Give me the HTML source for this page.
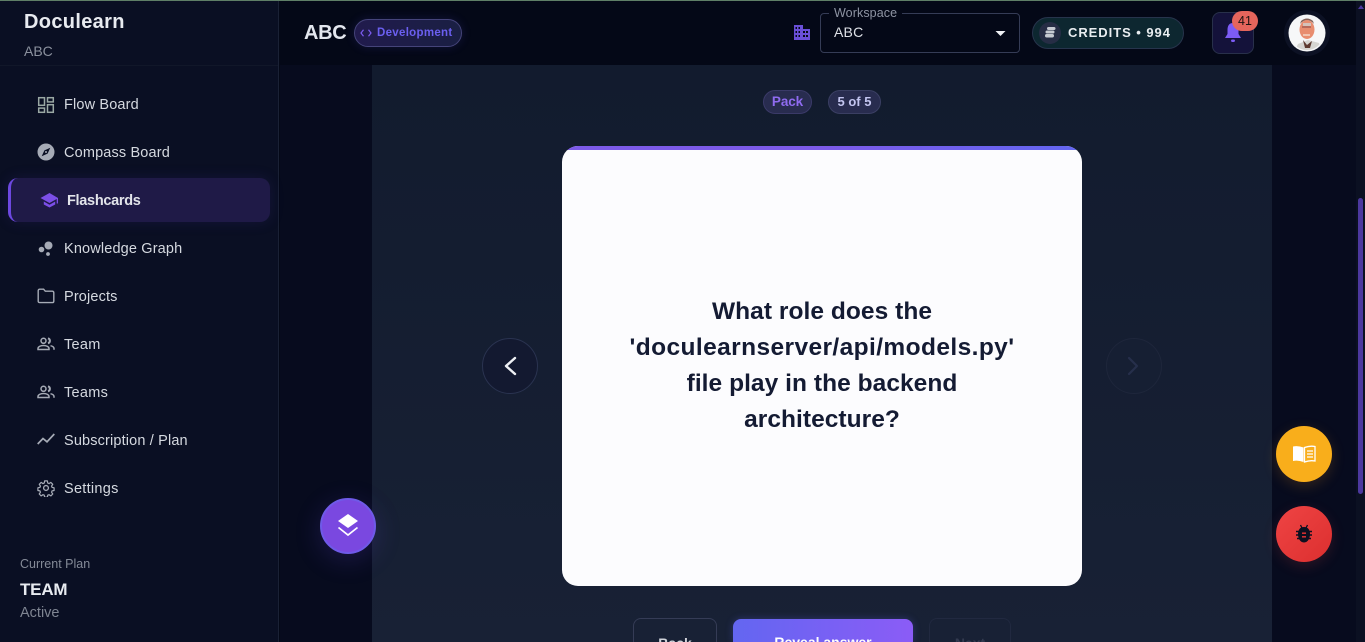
<!DOCTYPE html>
<html lang="en">
<head>
<meta charset="utf-8">
<title>Doculearn</title>
<style>
html,body{margin:0;padding:0;width:1365px;height:642px;overflow:hidden;background:#040817}
body{position:relative;font-family:"Liberation Sans",sans-serif;color:#e5e7eb}
.a{position:absolute;white-space:nowrap}
svg{position:absolute;display:block}
.nav{position:absolute;left:64px;font-size:14.5px;line-height:18px;color:#d5d9e0;letter-spacing:.15px;white-space:nowrap}
</style>
</head>
<body>
<div class="a" style="left:0;top:0;width:1365px;height:1px;background:#5f7f67;z-index:9"></div>

<!-- main background -->
<div class="a" style="left:280px;top:0;width:1085px;height:65px;background:#040817"></div>
<div class="a" style="left:280px;top:65px;width:92px;height:577px;background:#070b1e"></div>
<div class="a" style="left:372px;top:65px;width:900px;height:577px;background:linear-gradient(180deg,#121b2e,#182135)"></div>
<div class="a" style="left:1272px;top:65px;width:84px;height:577px;background:#070b1e"></div>
<div class="a" style="left:1356px;top:0;width:9px;height:642px;background:#0b1022"></div>
<div class="a" style="left:1358px;top:198px;width:5px;height:296px;border-radius:3px;background:#4c389f"></div>
<svg style="left:1357px;top:4px" width="8" height="6"><path d="M4 1 7 5H1Z" fill="#4c389f"/></svg>

<!-- sidebar -->
<div class="a" style="left:0;top:0;width:278px;height:642px;background:#0a0f23;border-right:1px solid #1a2135"></div>
<div class="a" style="left:0;top:65px;width:278px;height:1px;background:#111729"></div>
<div class="a" style="left:24px;top:10px;font-size:20px;line-height:24px;font-weight:700;color:#e8ebf0;letter-spacing:.33px">Doculearn</div>
<div class="a" style="left:24px;top:43px;font-size:14px;line-height:17px;color:#8b919e">ABC</div>

<div class="a" style="left:8px;top:178px;width:262px;height:44px;box-sizing:border-box;background:#1f1a47;border-left:3px solid #6d48e0;border-radius:10px;box-shadow:0 0 14px rgba(70,50,160,.18)"></div>

<!-- Flow Board -->
<svg style="left:37px;top:96px" width="18" height="18" viewBox="0 0 18 18" fill="none" stroke="#9aa8a4" stroke-width="1.5"><rect x="1.7" y="1.7" width="5.8" height="7.6"/><rect x="10.5" y="1.7" width="5.8" height="4.2"/><rect x="1.7" y="12.1" width="5.8" height="4.2"/><rect x="10.5" y="8.7" width="5.8" height="7.6"/></svg>
<div class="nav" style="top:96px">Flow Board</div>
<!-- Compass -->
<svg style="left:37px;top:143px" width="18" height="18" viewBox="0 0 18 18"><circle cx="9" cy="9" r="8.5" fill="#a6abb6"/><path d="M13.3 4.7 10.6 10.6 4.7 13.3 7.4 7.4Z" fill="#0a0f23"/><circle cx="9" cy="9" r="1" fill="#a6abb6"/></svg>
<div class="nav" style="top:144px">Compass Board</div>
<!-- Flashcards -->
<svg style="left:40px;top:191px" width="19" height="18" viewBox="0 0 19 18"><path d="M9.5 2 .5 7 9.5 12 16.700 8V12.500H18V7Z" fill="#7c4fe8"/><path d="M3.800 10.500V13.500L9.500 16.500 15.200 13.500V10.500L9.500 13.700Z" fill="#7c4fe8"/></svg>
<div class="nav" style="left:67px;top:192px;font-weight:700;color:#e2e4ea;letter-spacing:-.3px">Flashcards</div>
<!-- Knowledge Graph -->
<svg style="left:37px;top:240px" width="18" height="18" viewBox="0 0 18 18" fill="#a6abb6"><circle cx="11.500" cy="5.500" r="4"/><circle cx="4.500" cy="9.500" r="2.800"/><circle cx="11" cy="14" r="1.900"/></svg>
<div class="nav" style="top:240px">Knowledge Graph</div>
<!-- Projects -->
<svg style="left:37px;top:288px" width="18" height="16" viewBox="0 0 18 16" fill="none" stroke="#a6abb6" stroke-width="1.400"><path d="M1.200 2.800Q1.200 1.200 2.800 1.200H6.600L8.300 3.200H15.200Q16.800 3.200 16.800 4.800V13.200Q16.800 14.600 15.200 14.600H2.800Q1.200 14.600 1.200 13.200Z"/></svg>
<div class="nav" style="top:288px">Projects</div>
<!-- Team -->
<svg style="left:37px;top:337px" width="18" height="14" viewBox="0 0 18 14" fill="none" stroke="#a6abb6" stroke-width="1.500"><circle cx="6.500" cy="3.800" r="2.500"/><path d="M1 12.500V11.500C1 9.500 4 8.500 6.500 8.500S12 9.500 12 11.500V12.500Z"/><path d="M11 1.300A2.600 2.600 0 0 1 11 6.300" stroke-width="2"/><path d="M13.500 8.700C15.500 9.200 17 10 17 11.500V12.800"/></svg>
<div class="nav" style="top:336px;letter-spacing:.28px">Team</div>
<!-- Teams -->
<svg style="left:37px;top:385px" width="18" height="14" viewBox="0 0 18 14" fill="none" stroke="#a6abb6" stroke-width="1.500"><circle cx="6.500" cy="3.800" r="2.500"/><path d="M1 12.500V11.500C1 9.500 4 8.500 6.500 8.500S12 9.500 12 11.500V12.500Z"/><path d="M11 1.300A2.600 2.600 0 0 1 11 6.300" stroke-width="2"/><path d="M13.500 8.700C15.500 9.200 17 10 17 11.500V12.800"/></svg>
<div class="nav" style="top:384px;letter-spacing:.28px">Teams</div>
<!-- Subscription -->
<svg style="left:37px;top:432px" width="18" height="14" viewBox="0 0 18 14" fill="none" stroke="#a6abb6" stroke-width="1.700"><path d="M.700 12 6 6.500 10 9.800 17.300 2"/></svg>
<div class="nav" style="top:432px">Subscription / Plan</div>
<!-- Settings -->
<svg style="left:37px;top:479px" width="18" height="18" viewBox="0 0 24 24" fill="none" stroke="#a6abb6" stroke-width="1.800" stroke-linejoin="round"><circle cx="12" cy="12" r="3.200"/><path d="M10 1.500h4l.6 3.200 1.900.8 2.700-1.800 2.800 2.800-1.800 2.700.8 1.900 3 .6v4l-3 .6-.8 1.900 1.800 2.700-2.800 2.800-2.700-1.800-1.900.8-.6 3h-4l-.6-3-1.900-.8-2.700 1.800-2.800-2.800 1.800-2.700-.8-1.900-3-.6v-4l3-.6.8-1.900-1.800-2.700 2.800-2.800 2.700 1.800 1.900-.8Z" transform="translate(1.200 1.200) scale(.9)"/></svg>
<div class="nav" style="top:480px;letter-spacing:.28px">Settings</div>

<div class="a" style="left:20px;top:557px;font-size:12.500px;line-height:15px;color:#848a97">Current Plan</div>
<div class="a" style="left:20px;top:580px;font-size:17px;line-height:20px;font-weight:700;color:#e8ebf0;letter-spacing:-.2px">TEAM</div>
<div class="a" style="left:20px;top:604px;font-size:14.500px;line-height:18px;color:#7f8592">Active</div>

<!-- header left -->
<div class="a" style="left:304px;top:21px;font-size:20px;line-height:24px;font-weight:700;color:#e3e6ee;letter-spacing:-.3px">ABC</div>
<div class="a" style="left:354px;top:19px;width:108px;height:28px;box-sizing:border-box;border:1px solid #45447a;border-radius:14px;background:linear-gradient(90deg,#211b4d,#1a1f43);box-shadow:0 0 10px rgba(80,70,200,.2)"></div>
<svg style="left:360px;top:29px" width="12" height="8" viewBox="0 0 12 8" fill="none" stroke="#7c5cf0" stroke-width="1.200"><path d="M3.500 .8 1 4 3.500 7.200M8.500 .8 11 4 8.500 7.200"/></svg>
<div class="a" style="left:377px;top:26px;font-size:11.500px;line-height:14px;font-weight:700;color:#6b5ff0;letter-spacing:.3px">Development</div>

<!-- workspace -->
<svg style="left:793px;top:24px" width="18" height="17" viewBox="0 0 18 17" fill="#6a4fd8"><path d="M1 1H10V5H17V16H1ZM2.500 3V5H4V3ZM5.500 3V5H7V3ZM2.500 7V9H4V7ZM5.500 7V9H7V7ZM2.500 11V13H4V11ZM5.500 11V13H7V11ZM10 7V9H12V7ZM13 7V9H15V7ZM10 11V13H12V11ZM13 11V13H15V11Z" fill-rule="evenodd"/></svg>
<div class="a" style="left:820px;top:13px;width:200px;height:40px;box-sizing:border-box;border:1px solid #353c56;border-radius:4px"></div>
<div class="a" style="left:829px;top:6px;padding:0 5px;background:#040817;font-size:12.500px;line-height:14px;color:#8e94a3;letter-spacing:.1px">Workspace</div>
<div class="a" style="left:834px;top:24px;font-size:14px;line-height:17px;color:#dfe2e8;letter-spacing:.2px">ABC</div>
<svg style="left:995px;top:30px" width="11" height="7"><path d="M.500 1H10.500L5.500 6Z" fill="#eef0f4"/></svg>

<!-- credits -->
<div class="a" style="left:1032px;top:17px;width:152px;height:32px;box-sizing:border-box;border:1px solid #27344c;border-radius:16px;background:#0d2730"></div>
<div class="a" style="left:1039px;top:22px;width:22px;height:22px;border-radius:50%;background:#262d45"></div>
<svg style="left:1043px;top:26px" width="14" height="13" viewBox="0 0 14 13" fill="#c6cad2"><rect x="4" y="1" width="8.500" height="3" rx="1.500"/><rect x="2.500" y="4.500" width="9" height="3" rx="1.500"/><rect x="2" y="8" width="9" height="3.500" rx="1.700"/></svg>
<div class="a" style="left:1068px;top:25px;font-size:13px;line-height:16px;font-weight:700;color:#e9edf0;letter-spacing:.95px">CREDITS • 994</div>

<!-- bell -->
<div class="a" style="left:1212px;top:12px;width:42px;height:42px;box-sizing:border-box;border:1px solid #28304a;border-radius:8px;background:#14123a"></div>
<svg style="left:1223px;top:22px" width="20" height="22" viewBox="0 0 20 22" fill="#7c5cf5"><path d="M10 1C6 1 4.500 4 4.500 8V12L2 16H18L15.500 12V8C15.500 4 14 1 10 1Z"/><rect x="8" y="17.500" width="4" height="2.500" rx="1.200"/></svg>
<div class="a" style="left:1232px;top:11px;width:26px;height:20px;border-radius:10px;background:#e5655c;color:#1c1412;font-size:12.500px;line-height:20px;text-align:center">41</div>

<!-- avatar -->
<div class="a" style="left:1284px;top:10px;width:46px;height:46px;border-radius:50%;background:#0c1124"></div>
<svg style="left:1288px;top:14px" width="38" height="38" viewBox="0 0 38 38"><circle cx="19" cy="19" r="18.500" fill="#f6f7f8"/><clipPath id="c"><circle cx="19" cy="19" r="17"/></clipPath><g clip-path="url(#c)"><path d="M6 38 10 30 20 26 31 29 34 38Z" fill="#d6d6d2"/><path d="M15 26 19 31 24 27 22 34H17Z" fill="#5e3a30"/><ellipse cx="19" cy="15.500" rx="7.500" ry="9.500" fill="#e88d6f"/><path d="M12 10Q19 2 26 10L25 7Q19 2 13 7Z" fill="#86645a"/><rect x="14" y="12" width="9" height="2" fill="#b86a5a"/><rect x="15" y="20" width="7" height="2" fill="#f1c4b0"/><rect x="15" y="9" width="8" height="3" fill="#d4c2ba"/></g></svg>

<!-- pills -->
<div class="a" style="left:763px;top:90px;width:49px;height:24px;box-sizing:border-box;border:1px solid #3a3a68;border-radius:12px;background:#282c4f;color:#8f6bf0;font-size:13.500px;line-height:21px;text-align:center;font-weight:700;letter-spacing:-.1px">Pack</div>
<div class="a" style="left:828px;top:90px;width:53px;height:24px;box-sizing:border-box;border:1px solid #3a3f63;border-radius:12px;background:#282c4f;color:#c3c5f0;font-size:13px;line-height:21px;text-align:center;font-weight:700">5 of 5</div>

<!-- card -->
<div class="a" style="left:562px;top:146px;width:520px;height:440px;border-radius:16px;background:#fcfcfe;overflow:hidden"><div style="height:4px;background:linear-gradient(90deg,#7c5ae8 50%,#6366f1)"></div></div>
<div class="a" style="left:562px;top:294px;width:520px;text-align:center;font-size:24.500px;line-height:36px;font-weight:700;color:#141b33;letter-spacing:.05px">What role does the<br><span style="letter-spacing:.4px">'doculearnserver/api/models.py'</span><br>file play in the backend<br>architecture?</div>

<!-- arrows -->
<div class="a" style="left:482px;top:338px;width:56px;height:56px;box-sizing:border-box;border:1px solid #2a3350;border-radius:50%;background:#131930"></div>
<svg style="left:501px;top:355px" width="18" height="22" viewBox="0 0 18 22" fill="none" stroke="#eef0f4" stroke-width="2.400" stroke-linecap="round" stroke-linejoin="round"><path d="M14 3 5 11 14 19"/></svg>
<div class="a" style="left:1106px;top:338px;width:56px;height:56px;box-sizing:border-box;border:1px solid #1e263b;border-radius:50%;background:#161f33"></div>
<svg style="left:1125px;top:355px" width="18" height="22" viewBox="0 0 18 22" fill="none" stroke="#262f4b" stroke-width="2.200" stroke-linecap="round" stroke-linejoin="round"><path d="M4 3 12 11 4 19"/></svg>

<!-- bottom buttons, clipped at the frame edge -->
<div class="a" style="left:633px;top:618px;width:84px;height:24px;box-sizing:border-box;border:1px solid #353c56;border-bottom:0;border-radius:8px 8px 0 0;overflow:hidden;color:#d0d3da;font-size:14px;line-height:48px;text-align:center;font-weight:700">Back</div>
<div class="a" style="left:733px;top:619px;width:180px;height:23px;border-radius:8px 8px 0 0;overflow:hidden;background:linear-gradient(90deg,#6366f1,#8b5cf6);color:#fff;font-size:14px;line-height:46px;text-align:center;font-weight:700;box-shadow:0 0 8px rgba(99,102,241,.3)">Reveal answer</div>
<div class="a" style="left:929px;top:618px;width:82px;height:24px;box-sizing:border-box;border:1px solid #212940;border-bottom:0;border-radius:8px 8px 0 0;overflow:hidden;color:#333a50;font-size:14px;line-height:48px;text-align:center;font-weight:700">Next</div>

<!-- layers fab -->
<div class="a" style="left:320px;top:498px;width:56px;height:56px;box-sizing:border-box;border:2px solid #6f5ae8;border-radius:50%;background:#7a48e0;box-shadow:0 6px 26px rgba(100,70,220,.22)"></div>
<svg style="left:336px;top:512px" width="24" height="25" viewBox="0 0 24 25"><path d="M12 2 22 9 12 16 2 9Z" fill="#fff"/><path d="M2.500 15.500 12 23 21.500 15.500" fill="none" stroke="#fff" stroke-width="1.700"/></svg>

<!-- yellow fab -->
<div class="a" style="left:1276px;top:426px;width:56px;height:56px;border-radius:50%;background:#f9ae1b;box-shadow:0 4px 14px rgba(249,150,30,.18)"></div>
<svg style="left:1292px;top:445px" width="24" height="18" viewBox="0 0 24 18"><path d="M1 1.500Q6 .500 11.500 2.500V17Q6 15 1 16Z" fill="#fff"/><path d="M12.500 2.500Q18 .500 23 1.500V16Q18 15 12.500 17Z" fill="none" stroke="#fff" stroke-width="1.300"/><path d="M15 6H21M15 9H21M15 12H21" stroke="#fff" stroke-width="1.200"/></svg>

<!-- red fab -->
<div class="a" style="left:1276px;top:506px;width:56px;height:56px;border-radius:50%;background:linear-gradient(135deg,#ef4444,#dc2f2f);box-shadow:0 4px 14px rgba(239,68,68,.16)"></div>
<svg style="left:1295px;top:524px" width="18" height="20" viewBox="0 0 18 20"><path d="M5.500 1 7 4H11L12.500 1" fill="none" stroke="#0d1020" stroke-width="1.300"/><path d="M9 3C13 3 15 6 15 10S13 18.500 9 18.500 3 14 3 10 5 3 9 3Z" fill="#0d1020"/><path d="M1 7.500H17M1 11H17M2 14.500H16" stroke="#0d1020" stroke-width="1.600"/><path d="M7 9.200H11M7 12.800H11" stroke="#e33" stroke-width="1.400"/></svg>
</body>
</html>
